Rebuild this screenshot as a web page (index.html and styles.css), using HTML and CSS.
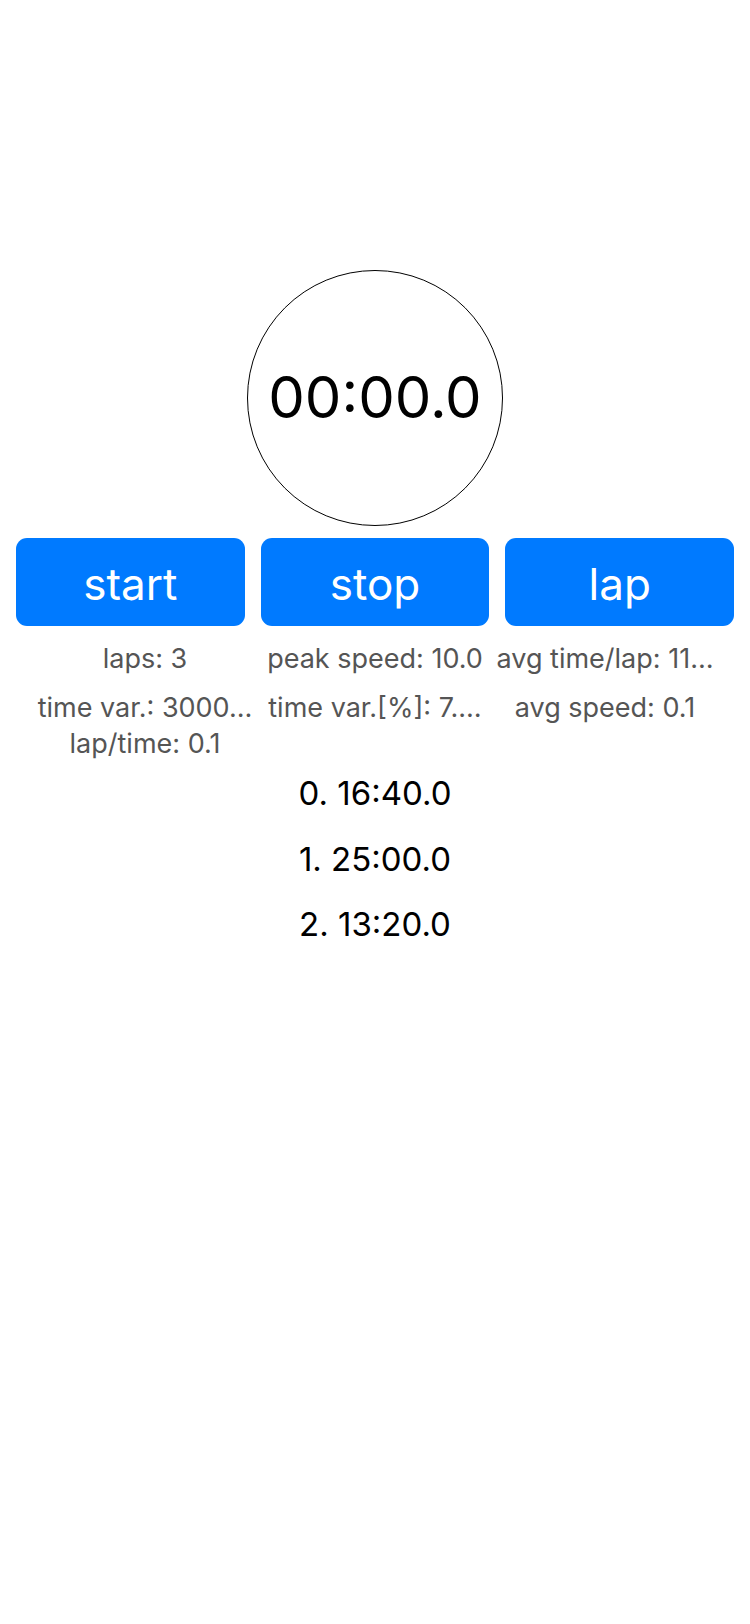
FILE: index.html
```html
<!DOCTYPE html>
<html lang="en">
<head>
<meta charset="utf-8">
<title>Lap Timer</title>
<link rel="stylesheet" href="styles.css">
</head>
<body>
<main class="app">
  <section class="dial">
    <div class="dial-face">00:00.0</div>
  </section>
  <section class="controls">
    <button class="btn">start</button>
    <button class="btn">stop</button>
    <button class="btn">lap</button>
  </section>
  <section class="stats">
    <div class="stat-col">
      <div class="stat">laps: 3</div>
      <div class="stat-group">
        <div class="stat">time var.: 3000…</div>
        <div class="stat">lap/time: 0.1</div>
      </div>
    </div>
    <div class="stat-col">
      <div class="stat">peak speed: 10.0</div>
      <div class="stat">time var.[%]: 7.…</div>
    </div>
    <div class="stat-col">
      <div class="stat">avg time/lap: 11…</div>
      <div class="stat">avg speed: 0.1</div>
    </div>
  </section>
  <ol class="laps">
    <li class="lap">0. 16:40.0</li>
    <li class="lap">1. 25:00.0</li>
    <li class="lap">2. 13:20.0</li>
  </ol>
</main>
</body>
</html>
```

FILE: styles.css
```css
* { box-sizing: border-box; }
html, body {
  margin: 0;
  padding: 0;
  background: #fff;
}
body {
  width: 750px;
  min-height: 1624px;
  font-family: Inter, "Noto Sans", "Liberation Sans", sans-serif;
  color: #000;
}
.app {
  padding-top: 270px;
  display: flex;
  flex-direction: column;
}
.dial {
  display: flex;
  justify-content: center;
}
.dial-face {
  width: 256px;
  height: 256px;
  border: 1px solid #000;
  border-radius: 50%;
  display: flex;
  align-items: center;
  justify-content: center;
  font-size: 58px;
  font-weight: 400;
  padding-bottom: 2px;
}
.controls {
  margin-top: 12px;
  padding: 0 16px;
  display: flex;
  gap: 16px;
}
.btn {
  flex: 1;
  height: 88px;
  border: none;
  border-radius: 11px;
  background: #007aff;
  color: #fff;
  font-family: inherit;
  font-size: 44px;
  font-weight: 400;
  padding: 3px 0 0;
}
.stats {
  margin-top: 15px;
  padding: 0 30px;
  display: grid;
  grid-template-columns: repeat(3, 1fr);
}
.stat-col {
  display: flex;
  flex-direction: column;
  align-items: center;
  gap: 14px;
}
.stat-group {
  display: flex;
  flex-direction: column;
  align-items: center;
  gap: 1px;
}
.stat {
  font-size: 27px;
  line-height: 35px;
  color: #555;
  white-space: nowrap;
}
.laps {
  list-style: none;
  margin: 0;
  padding: 0;
  display: flex;
  flex-direction: column;
  align-items: center;
}
.lap {
  font-size: 33px;
  line-height: 65.5px;
}
```
